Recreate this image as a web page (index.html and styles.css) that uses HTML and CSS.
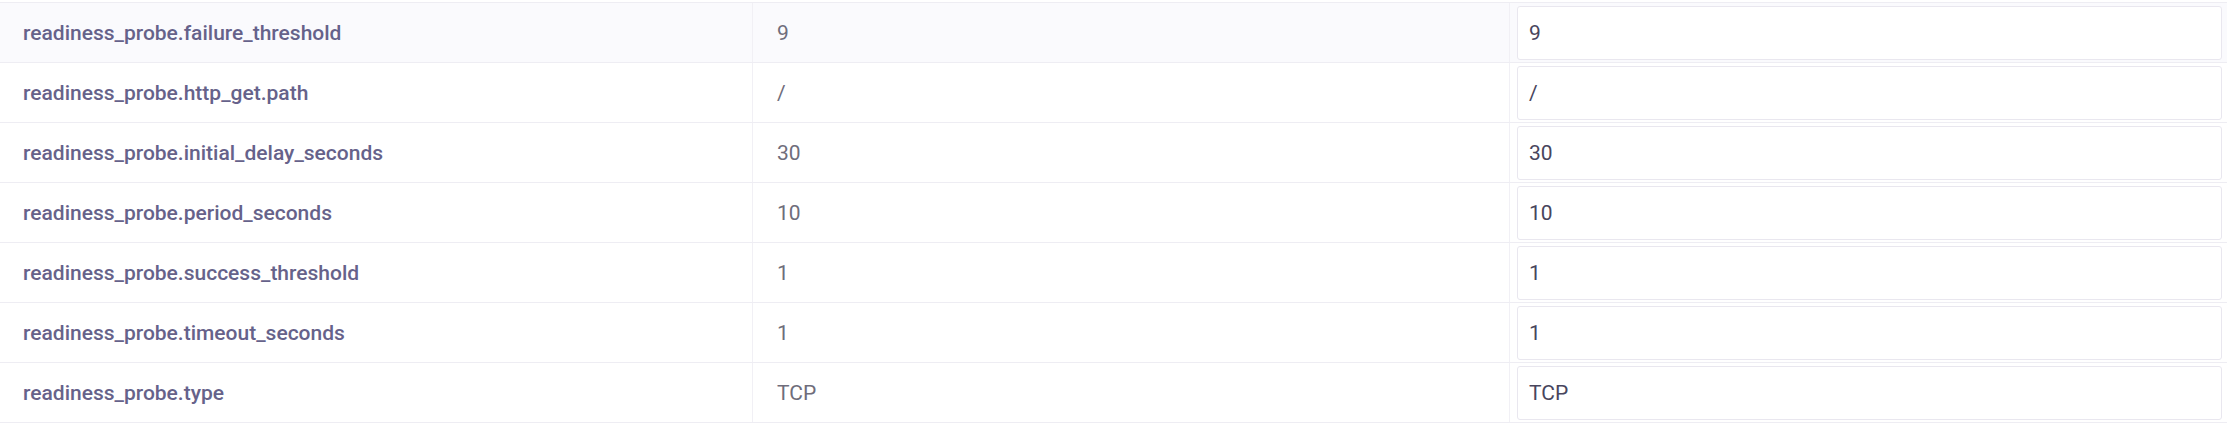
FILE: index.html
```html
<!DOCTYPE html>
<html>
<head>
<meta charset="utf-8">
<link rel="stylesheet" href="styles.css">
</head>
<body>
<div class="table">
  <div class="row active">
    <div class="cell key">readiness_probe.failure_threshold</div>
    <div class="cell val">9</div>
    <div class="cell edit"><div class="input">9</div></div>
  </div>
  <div class="row">
    <div class="cell key">readiness_probe.http_get.path</div>
    <div class="cell val">/</div>
    <div class="cell edit"><div class="input">/</div></div>
  </div>
  <div class="row">
    <div class="cell key">readiness_probe.initial_delay_seconds</div>
    <div class="cell val">30</div>
    <div class="cell edit"><div class="input">30</div></div>
  </div>
  <div class="row">
    <div class="cell key">readiness_probe.period_seconds</div>
    <div class="cell val">10</div>
    <div class="cell edit"><div class="input">10</div></div>
  </div>
  <div class="row">
    <div class="cell key">readiness_probe.success_threshold</div>
    <div class="cell val">1</div>
    <div class="cell edit"><div class="input">1</div></div>
  </div>
  <div class="row">
    <div class="cell key">readiness_probe.timeout_seconds</div>
    <div class="cell val">1</div>
    <div class="cell edit"><div class="input">1</div></div>
  </div>
  <div class="row">
    <div class="cell key">readiness_probe.type</div>
    <div class="cell val">TCP</div>
    <div class="cell edit"><div class="input">TCP</div></div>
  </div>
</div>
</body>
</html>
```

FILE: styles.css
```css
html, body {
  margin: 0;
  padding: 0;
  background: #ffffff;
}
body {
  font-family: Roboto, "Liberation Sans", sans-serif;
  -webkit-font-smoothing: antialiased;
}
.table {
  margin-top: 2px;
  border-top: 1px solid #eeedf3;
  width: 2227px;
}
.row {
  display: grid;
  grid-template-columns: 753px 757px 717px;
  height: 59px;
  border-bottom: 1px solid #eeedf3;
}
.row.active {
  background: #fafafd;
}
.cell {
  display: flex;
  align-items: center;
  font-size: 21px;
}
.key {
  padding-left: 23px;
  color: #66628a;
  font-weight: 500;
  border-right: 1px solid #f1f0f5;
}
.val {
  padding-left: 24px;
  color: #6f6d7b;
  border-right: 1px solid #f1f0f5;
}
.edit {
  padding: 0 5px 0 7px;
}
.input {
  flex: 1;
  height: 54px;
  box-sizing: border-box;
  border: 1px solid #e9e7ef;
  border-radius: 3px;
  background: #ffffff;
  display: flex;
  align-items: center;
  padding-left: 11px;
  color: #48455d;
}
```
